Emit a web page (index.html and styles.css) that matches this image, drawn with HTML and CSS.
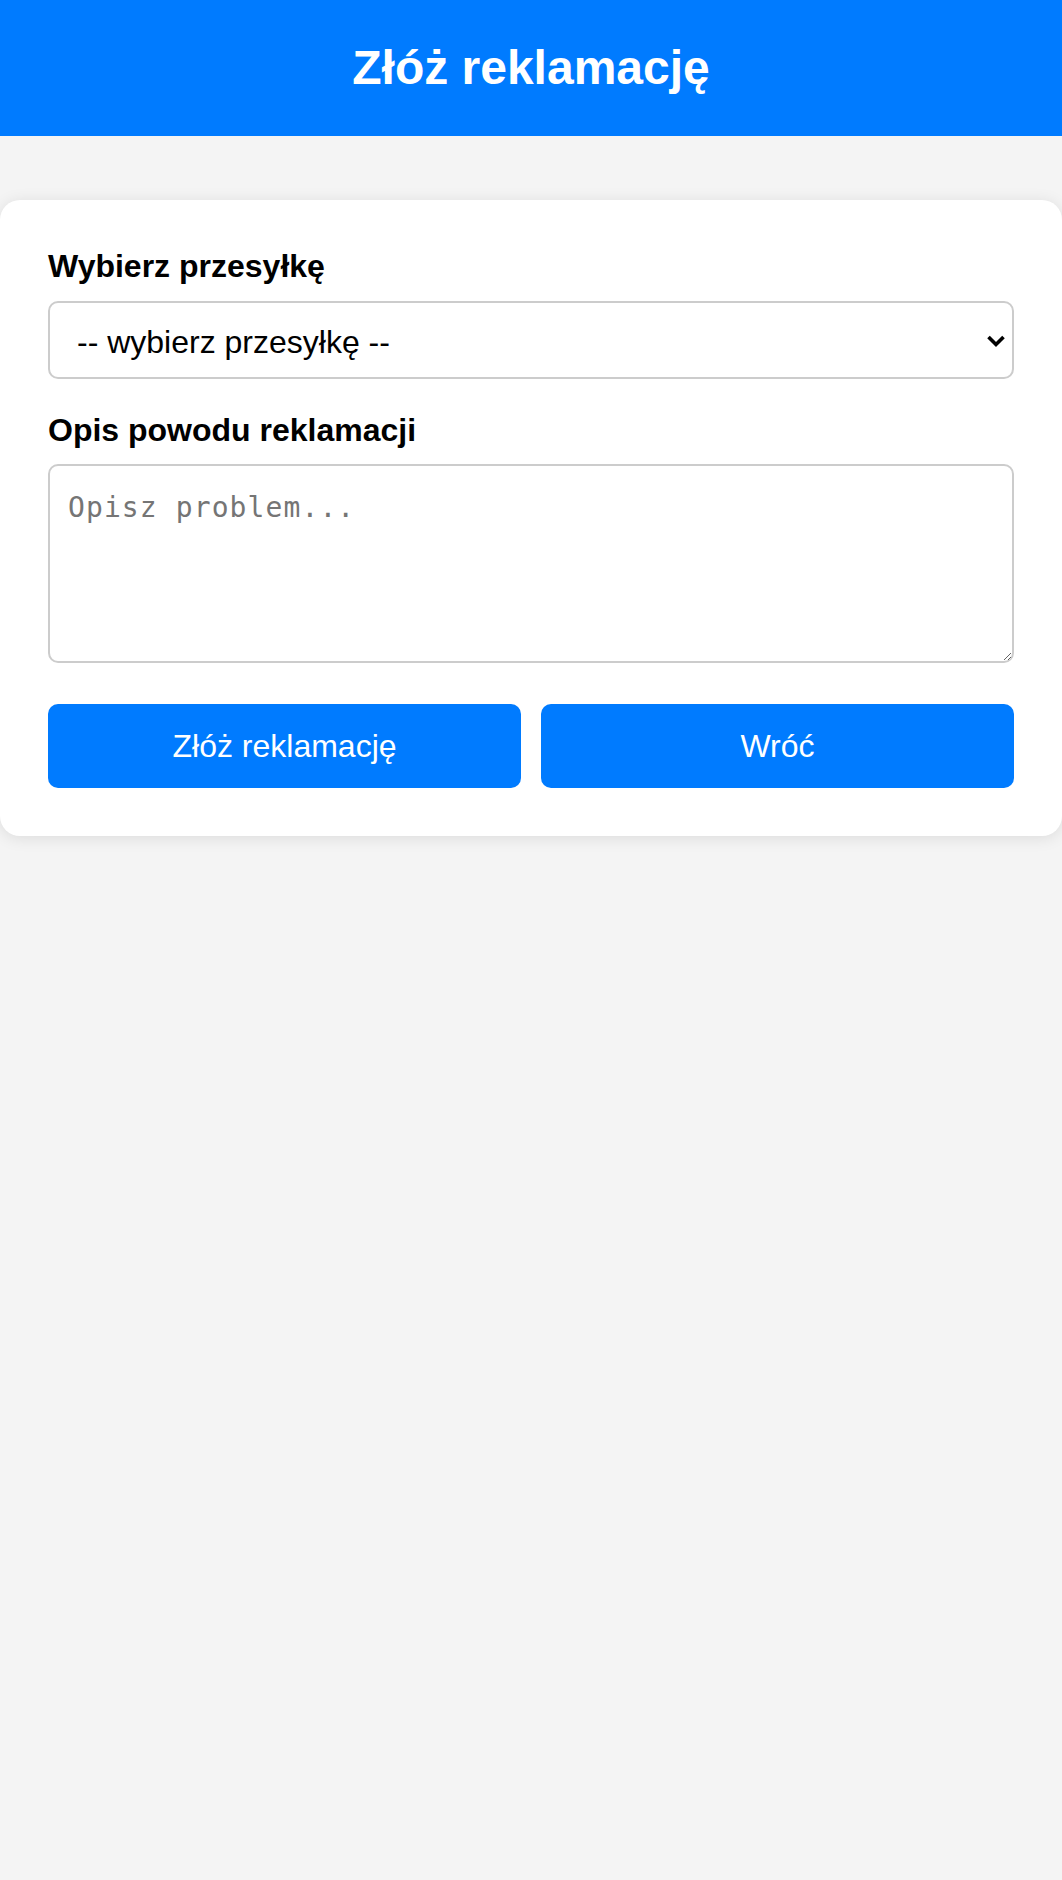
FILE: index.html
```html
<!DOCTYPE html>
<html lang="pl">
<head>
<meta charset="utf-8">
<title>Złóż reklamację</title>
<link rel="stylesheet" href="styles.css">
</head>
<body>
<header class="top-bar">
  <h1 class="top-title">Złóż reklamację</h1>
</header>
<main class="card">
  <form class="complaint-form">
    <label class="field-label" for="parcel">Wybierz przesyłkę</label>
    <div class="select-wrap">
      <select id="parcel" class="field-select">
        <option>-- wybierz przesyłkę --</option>
      </select>
      <svg class="select-arrow" width="20" height="14" viewBox="0 0 20 14" aria-hidden="true">
        <path d="M2.5 3 L10 10.5 L17.5 3" fill="none" stroke="#000" stroke-width="3.6" stroke-linecap="butt" stroke-linejoin="miter"/>
      </svg>
    </div>
    <label class="field-label second" for="desc">Opis powodu reklamacji</label>
    <textarea id="desc" class="field-textarea" placeholder="Opisz problem..."></textarea>
    <div class="actions">
      <button type="button" class="btn">Złóż reklamację</button>
      <button type="button" class="btn">Wróć</button>
    </div>
  </form>
</main>
</body>
</html>
```
FILE: styles.css
```css
html, body {
  margin: 0;
  padding: 0;
}
body {
  background: #f4f4f4;
  font-family: "Liberation Sans", Arial, sans-serif;
  color: #000;
  min-height: 1880px;
}
.top-bar {
  background: #007bff;
  color: #fff;
  padding: 40px 20px 41px;
  text-align: center;
}
.top-title {
  margin: 0;
  font-size: 48px;
  font-weight: bold;
  line-height: normal;
}
.card {
  display: block;
  margin: 64px 0 0;
  background: #fff;
  border-radius: 20px;
  box-shadow: 0 2px 16px rgba(0, 0, 0, 0.1);
  padding: 48px;
}
.complaint-form {
  display: flex;
  flex-direction: column;
}
.field-label {
  display: block;
  font-size: 32px;
  font-weight: bold;
  line-height: normal;
  margin-bottom: 16px;
}
.field-label.second {
  margin-bottom: 15px;
}
.select-wrap {
  position: relative;
  margin-bottom: 33px;
}
.field-select {
  display: block;
  width: 100%;
  height: 78px;
  box-sizing: border-box;
  -webkit-appearance: none;
  appearance: none;
  background: #fff;
  border: 2px solid #ccc;
  border-radius: 10px;
  padding: 3px 40px 0 27px;
  font-family: "Liberation Sans", Arial, sans-serif;
  font-size: 32px;
  color: #000;
  margin: 0;
}
.select-arrow {
  position: absolute;
  right: 8px;
  top: 33px;
  pointer-events: none;
}
.field-textarea {
  display: block;
  width: 100%;
  height: 199px;
  box-sizing: border-box;
  border: 2px solid #ccc;
  border-radius: 10px;
  padding: 25px 18px 20px;
  font-family: "DejaVu Sans Mono", "Liberation Mono", monospace;
  font-size: 28px;
  letter-spacing: 1.1px;
  margin: 0 0 41px;
  background: #fff;
  color: #000;
}
.field-textarea::placeholder {
  color: #757575;
}
.actions {
  display: flex;
  gap: 20px;
}
.btn {
  flex: 1 1 0;
  height: 84px;
  background: #007bff;
  color: #fff;
  border: none;
  border-radius: 10px;
  font-family: "Liberation Sans", Arial, sans-serif;
  font-size: 32px;
  padding: 0;
  margin: 0;
  cursor: pointer;
}
```
